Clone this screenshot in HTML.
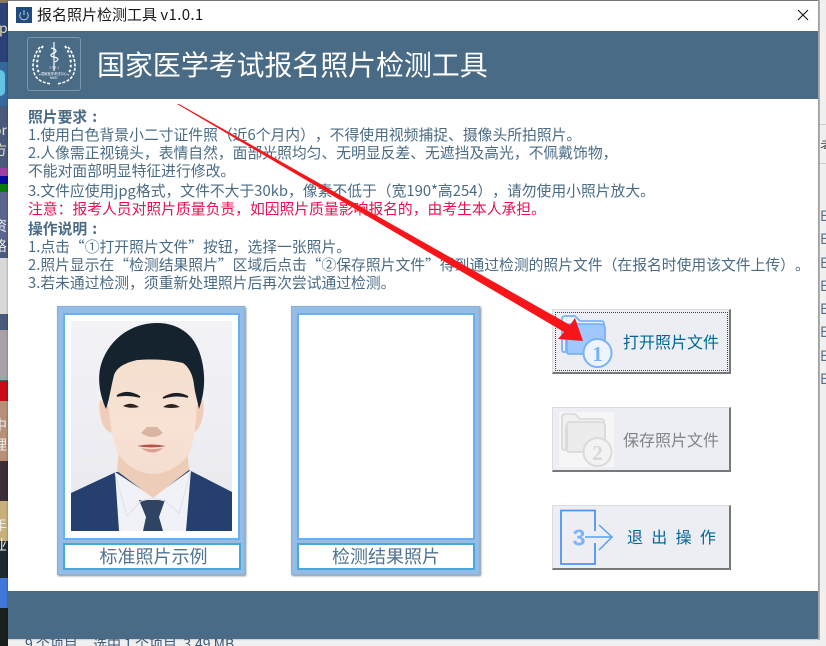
<!DOCTYPE html>
<html lang="zh-CN"><head><meta charset="utf-8"><style>
html,body{margin:0;padding:0;width:826px;height:646px;overflow:hidden;background:#e8e8ea}
*{box-sizing:border-box}
body{position:relative;font-family:"Noto Sans CJK SC","Liberation Sans",sans-serif;text-spacing-trim:space-all}
.a{position:absolute}
.t{position:absolute;left:28px;white-space:nowrap;font-size:14.8px;line-height:18px;color:#4a6b86;height:18px}
.b{font-weight:bold}
.b span{margin-left:5px}
.btn{position:absolute;left:552px;width:179px;background:#eceef3;border-top:1px solid #dcdcdc;border-left:1px solid #dcdcdc;border-right:2px solid #77787a;border-bottom:2px solid #77787a}
.lbl{position:absolute;font-size:16px;line-height:20px;white-space:nowrap;color:#036595}
</style></head><body>
<!-- desktop bg left -->
<div class="a" style="left:0;top:0;width:8px;height:646px;background:#4a5a7c"></div>
<div class="a" style="left:0;top:0;width:8px;height:62px;background:#2b4178"></div>
<div class="a" style="left:0;top:0;width:8px;height:3px;background:#8a7a60"></div>
<div class="a" style="left:0;top:62px;width:8px;height:44px;background:#35699e"></div>
<div class="a" style="left:0;top:70px;width:5px;height:26px;background:#63c3e0;border-radius:0 12px 12px 0"></div>
<div class="a" style="left:0;top:168px;width:8px;height:8px;background:#a03fa0"></div>
<div class="a" style="left:0;top:176px;width:8px;height:8px;background:#0a0a9a"></div>
<div class="a" style="left:0;top:184px;width:8px;height:8px;background:#0a7a0a"></div>
<div class="a" style="left:0;top:192px;width:8px;height:50px;background:#5a6690"></div>
<div class="a" style="left:0;top:258px;width:8px;height:56px;background:#d8d8d8"></div>
<div class="a" style="left:0;top:330px;width:8px;height:50px;background:#a9a0a8"></div>
<div class="a" style="left:0;top:381px;width:8px;height:20px;background:#c80e14"></div>
<div class="a" style="left:0;top:401px;width:8px;height:60px;background:#b88f78"></div>
<div class="a" style="left:0;top:461px;width:8px;height:40px;background:#3a2f38"></div>
<div class="a" style="left:0;top:501px;width:8px;height:40px;background:#c9b07a"></div>
<div class="a" style="left:0;top:541px;width:8px;height:40px;background:#1a2a30"></div>
<div class="a" style="left:0;top:578px;width:8px;height:30px;background:#3f78d8"></div>
<div class="a" style="left:0;top:608px;width:8px;height:38px;background:#18201c"></div>
<div class="a" style="left:0;top:18px;font-size:14px;color:#e8d8a8;width:8px;overflow:hidden;line-height:20px;height:20px"><span style="margin-left:-1px">p</span></div>
<div class="a" style="left:0;top:120px;font-size:14px;color:#e8e0c8;width:8px;overflow:hidden;line-height:20px;height:40px"><span style="margin-left:-7px">or</span><br><span style="margin-left:-7px">方</span></div>
<div class="a" style="left:0;top:216px;font-size:14px;color:#eee;width:8px;overflow:hidden;line-height:20px;height:44px"><span style="margin-left:-7px">资</span><br><span style="margin-left:-7px">格</span></div>
<div class="a" style="left:0;top:415px;font-size:14px;color:#eee;width:8px;overflow:hidden;line-height:20px;height:44px"><span style="margin-left:-7px">中</span><br><span style="margin-left:-7px">理</span></div>
<div class="a" style="left:0;top:515px;font-size:14px;color:#eee;width:8px;overflow:hidden;line-height:20px;height:44px"><span style="margin-left:-7px">年</span><br><span style="margin-left:-7px">业</span></div>
<!-- explorer right -->
<div class="a" style="left:818px;top:0;width:8px;height:646px;background:#f0f0f0"></div>
<div class="a" style="left:818px;top:0;width:2px;height:640px;background:#b5b5b5"></div>
<div class="a" style="left:820px;top:124px;width:6px;height:1px;background:#ccc"></div>
<div class="a" style="left:820px;top:163px;width:6px;height:1px;background:#ccc"></div>
<div class="a" style="left:820px;top:136px;font-size:14px;line-height:20px;color:#555;width:6px;overflow:hidden">考</div>
<div class="a" style="left:820px;top:205px;font-size:14px;line-height:23.3px;color:#5a6f86;width:6px;overflow:hidden">E<br>E<br>E<br>E<br>E<br>E<br>E<br>E</div>
<!-- bottom status -->
<div class="a" style="left:8px;top:639px;width:810px;height:7px;overflow:hidden;background:#f0f0f0">
<div class="a" style="left:17px;top:-3px;font-size:14px;line-height:16px;color:#3c5a7a;white-space:nowrap">9 个项目</div>
<div class="a" style="left:85px;top:-3px;font-size:14px;line-height:16px;color:#3c5a7a;white-space:nowrap">选中 1 个项目&nbsp; 3.49 MB</div>
</div>
<!-- window -->
<div class="a" style="left:8px;top:0;width:810px;height:639px;background:#fff;box-shadow:0 0 2px rgba(0,0,0,.4)"></div>
<div class="a" style="left:8px;top:0;width:810px;height:1px;background:#777"></div>
<div class="a" style="left:16px;top:7px;width:16px;height:16px;background:#1e4a7c"></div>
<svg class="a" style="left:16px;top:7px" width="16" height="16" viewBox="0 0 16 16"><path d="M5 5.500A4.300 4.300 0 1 0 11 5.500M8 3V8" fill="none" stroke="#b8c8d8" stroke-width="1"/></svg>
<div class="a" style="left:37px;top:6px;font-size:15px;line-height:18px;color:#1a1a1a;white-space:nowrap">报名照片检测工具 <span style="letter-spacing:.35px">v1.0.1</span></div>
<svg class="a" style="left:797px;top:9px" width="12" height="12" viewBox="0 0 12 12"><path d="M1 1L11 11M11 1L1 11" stroke="#111" stroke-width="1.100" fill="none"/></svg>
<!-- header -->
<div class="a" style="left:8px;top:31px;width:810px;height:68px;background:#4a6b86"></div>
<div class="a" style="left:27px;top:37px;width:54px;height:54px;border:1px solid #7b95aa;border-radius:3px"></div>
<svg class="a" style="left:27px;top:37px" width="54" height="54" viewBox="0 0 54 54">
<g fill="none" stroke="#fff">
<path d="M27 5V34" stroke-width="1.200"/>
<path d="M24 11c6 1 6 4 3 5s-5 3 0 4 5 3 1 5" stroke-width="1.200"/>
<path d="M13 10C6 18 3 33 10 41c4 4 9 5 14 6M41 10c7 8 10 23 3 31-4 4-9 5-14 6" stroke-width="1.600" stroke-dasharray="3 1.500"/>
<path d="M16 9C10 17 8 30 13 38M38 9c6 8 8 21 3 29" stroke-width="2" stroke-dasharray="2.500 2.500"/>
</g>
<text x="27" y="32" font-size="3.500" fill="#dde" text-anchor="middle" font-family="'Noto Sans CJK SC',sans-serif">1 9 8 1</text>
<text x="27" y="38" font-size="3.200" fill="#fff" text-anchor="middle" font-family="'Noto Sans CJK SC',sans-serif">国家医学考试中心</text>
<text x="27" y="42" font-size="3" fill="#fff" text-anchor="middle" font-family="'Noto Sans CJK SC',sans-serif">NMEC</text>
</svg>
<div class="a" style="left:97px;top:46px;font-size:28px;line-height:36px;color:#fff;white-space:nowrap;letter-spacing:-.1px">国家医学考试报名照片检测工具</div>
<!-- text -->
<div class="t b" style="top:108px">照片要求<span>:</span></div>
<div class="t" style="top:126px">1.使用白色背景小二寸证件照（近6个月内），不得使用视频捕捉、摄像头所拍照片。</div>
<div class="t" style="top:144px">2.人像需正视镜头，表情自然，面部光照均匀、无明显反差、无遮挡及高光，不佩戴饰物，</div>
<div class="t" style="top:162px">不能对面部明显特征进行修改。</div>
<div class="t" style="top:182px">3.文件应使用jpg格式，文件不大于30kb，像素不低于（宽190*高254），请勿使用小照片放大。</div>
<div class="t" style="top:200px;color:#e8104f">注意：报考人员对照片质量负责，如因照片质量影响报名的，由考生本人承担。</div>
<div class="t b" style="top:220px">操作说明<span>:</span></div>
<div class="t" style="top:238px">1.点击“①打开照片文件”按钮，选择一张照片。</div>
<div class="t" style="top:256px">2.照片显示在“检测结果照片”区域后点击“②保存照片文件”得到通过检测的照片文件（在报名时使用该文件上传）。</div>
<div class="t" style="top:274px">3.若未通过检测，须重新处理照片后再次尝试通过检测。</div>
<!-- frame 1 -->
<div class="a" style="left:57px;top:306px;width:188px;height:269px;background:#93bde6;border:1px solid #8fb0d0;box-shadow:1px 1px 2px #7a8a9a"></div>
<div class="a" style="left:63px;top:313px;width:177px;height:227px;background:#fff;border:2px solid #69b0ec"></div>
<div class="a" style="left:63px;top:543px;width:178px;height:27px;background:#fff;border:2px solid #4aa8d8"></div>
<div class="a" style="left:63px;top:544px;width:181px;text-align:center;font-size:18px;line-height:24px;color:#4f7392">标准照片示例</div>
<svg class="a" style="left:71px;top:321px" width="161" height="210" viewBox="0 0 161 210">
<defs><linearGradient id="bg" x1="0" y1="0" x2="0" y2="1"><stop offset="0" stop-color="#f3f3f7"/><stop offset="1" stop-color="#e8e8ee"/></linearGradient>
<linearGradient id="sk" x1="0" y1="0" x2="0" y2="1"><stop offset="0" stop-color="#f5dfcf"/><stop offset=".6" stop-color="#f8e2d4"/><stop offset="1" stop-color="#f5ddd0"/></linearGradient></defs>
<rect width="161" height="210" fill="url(#bg)"/>
<path d="M0 172L45 151L118 149L161 171V210H0Z" fill="#25406f"/>
<path d="M44 151L48 210H115L120 149L82 176Z" fill="#f1f2f7"/>
<path d="M46 150L82 177L118 149L116 128H48Z" fill="#eecdb8"/>
<path d="M68 179L94 179L88 196L92 210H72L75 196Z" fill="#2f4462"/>
<path d="M44 152L56 195L70 180L82 177M120 149L108 192L94 180L82 177" stroke="#dfe0e6" stroke-width="1" fill="none"/>
<path d="M29 79C27 90 30 108 40 112L44 90ZM132 79C134 90 131 108 122 112L118 90Z" fill="#efcdb9"/>
<path d="M38 52C36 90 40 118 48 134C58 148 72 153 82 153C92 153 108 147 118 133C125 116 128 80 124 50C110 32 50 32 38 52Z" fill="url(#sk)"/>
<path d="M70 112Q82 120 92 112L86 106H76Z" fill="#c09078" opacity=".55"/>
<path d="M35 88C27 70 26 52 32 38C42 14 64 2 86 2C110 2 126 16 131 40C135 58 133 74 128 88C126 78 124 72 123 64C122 54 118 46 112 42C96 38 78 38 66 39C54 42 46 46 43 54C40 66 38 80 35 88Z" fill="#15232e"/>
<path d="M46 75Q56 68 69 76Q57 73 46 75ZM92 77Q105 69 117 76Q105 73 92 77Z" fill="#1a2026" stroke="#1a2026" stroke-width="1.600"/>
<path d="M52 85Q60 80 68 86Q60 88 52 85ZM92 86Q100 80 109 86Q100 88 92 86Z" fill="#2a2426"/>
<path d="M66 125Q80 122 95 125Q80 128 66 125Z" fill="#b25448"/>
<path d="M70 127Q80 129 92 127Q82 136 70 127Z" fill="#dca090"/>
</svg>
<!-- frame 2 -->
<div class="a" style="left:291px;top:306px;width:189px;height:269px;background:#93bde6;border:1px solid #8fb0d0;box-shadow:1px 1px 2px #7a8a9a"></div>
<div class="a" style="left:297px;top:313px;width:178px;height:227px;background:#fff;border:2px solid #69b0ec"></div>
<div class="a" style="left:297px;top:543px;width:178px;height:27px;background:#fff;border:2px solid #4aa8d8"></div>
<div class="a" style="left:297px;top:544px;width:178px;text-align:center;font-size:18px;line-height:24px;color:#4f7392">检测结果照片</div>
<!-- button 1 -->
<div class="btn" style="top:309px;height:65px"></div>
<div class="a" style="left:555px;top:312px;width:173px;height:59px;border:1px dotted #7a2a20"></div>
<svg class="a" style="left:559px;top:314px" width="56" height="56" viewBox="0 0 56 56">
<path d="M3 36V5Q3 2 6 2H16L21 7H42Q45 7 45 10V13H9Q7 13 7 16V38H5Q3 38 3 36Z" fill="#eaf2fd" stroke="#79b2f8" stroke-width="1.800"/>
<path d="M8 38V13Q8 10 11 10H40Q46 10 46 14V38Q46 40 44 40H10Q8 40 8 38Z" fill="#a0c8ff" stroke="#79b2f8" stroke-width="1.800"/>
<circle cx="38.500" cy="39" r="14" fill="#eef4fd" stroke="#79b2f8" stroke-width="2"/>
<text x="38.500" y="47" text-anchor="middle" font-size="21" font-weight="bold" font-family="'Liberation Serif',serif" fill="#79b2f8">1</text>
</svg>
<div class="lbl" style="left:623px;top:331px">打开照片文件</div>
<!-- button 2 -->
<div class="btn" style="top:407px;height:65px"></div>
<div class="a" style="left:559px;top:412px;width:55px;height:55px;background:#f6f6f6"></div>
<svg class="a" style="left:559px;top:412px" width="56" height="56" viewBox="0 0 56 56">
<path d="M3 36V5Q3 2 6 2H16L21 7H42Q45 7 45 10V13H9Q7 13 7 16V38H5Q3 38 3 36Z" fill="#f0f0f0" stroke="#dadada" stroke-width="1.800"/>
<path d="M8 38V13Q8 10 11 10H40Q46 10 46 14V38Q46 40 44 40H10Q8 40 8 38Z" fill="#ececec" stroke="#dadada" stroke-width="1.800"/>
<circle cx="38.500" cy="40" r="14" fill="#f3f3f3" stroke="#dadada" stroke-width="2"/>
<text x="38.500" y="48" text-anchor="middle" font-size="21" font-weight="bold" font-family="'Liberation Serif',serif" fill="#d6d6d6">2</text>
</svg>
<div class="lbl" style="left:623px;top:429px;color:#808488">保存照片文件</div>
<!-- button 3 -->
<div class="btn" style="top:505px;height:65px"></div>
<svg class="a" style="left:559px;top:508px" width="56" height="60" viewBox="0 0 56 60">
<path d="M36 23V2.500H2V56H36V35" fill="none" stroke="#4d94f5" stroke-width="1.800"/>
<path d="M26 29H53M40 17L53 29L40 42" fill="none" stroke="#5aa0f5" stroke-width="1.500"/>
<text x="20" y="37.500" text-anchor="middle" font-size="23" font-weight="bold" font-family="'Liberation Sans',sans-serif" fill="#7cb4fb">3</text>
</svg>
<div class="lbl" style="left:627px;top:526px;letter-spacing:8.300px">退出操作</div>
<!-- footer -->
<div class="a" style="left:8px;top:591px;width:810px;height:48px;background:#4a6b86"></div>
<!-- arrow -->
<svg class="a" style="left:0;top:0" width="826" height="646" viewBox="0 0 826 646">
<polygon points="177,104 179,104 570,325 575,318 583,341 558,339 564,332" fill="#f8151a"/>
</svg>
</body></html>
